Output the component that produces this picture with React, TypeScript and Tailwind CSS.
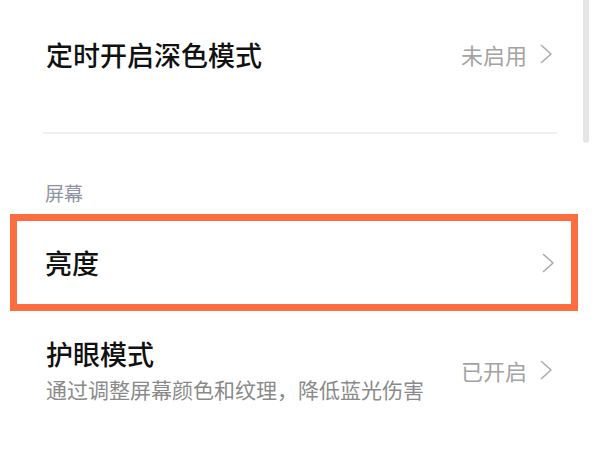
import React from 'react';

const cjk = { fontFamily: '"Noto Sans CJK SC", "Noto Sans", sans-serif' };

function Chevron() {
  return (
    <svg width="13" height="20" viewBox="0 0 13 20" fill="none" className="shrink-0">
      <polyline points="1.5,1.5 11,10 1.5,18.5" stroke="#ababab" strokeWidth="1.6" strokeLinecap="round" strokeLinejoin="round" />
    </svg>
  );
}

export default function App() {
  return (
    <div className="relative w-[600px] h-[450px] overflow-hidden bg-white" style={cjk}>
      {/* 滚动条 */}
      <div className="absolute right-[11px] top-0 w-[6px] h-[143px] rounded-b-full bg-[#e6e6e6]" />

      {/* 定时开启深色模式 */}
      <div className="flex items-center h-[108px] pl-[46px] pr-[47px]">
        <span className="flex-1 text-[27px] font-medium text-[#111] leading-none">定时开启深色模式</span>
        <span className="text-[22px] text-[#a3a3a3] leading-none mr-[13px]">未启用</span>
        <Chevron />
      </div>
      <div className="ml-[43px] mr-[43px] mt-[24px] h-[2px] bg-[#efefef]" />

      {/* 屏幕 */}
      <div className="pl-[45px] pt-[47px] pb-[9px] text-[19px] leading-[24px] text-[#8e93a3]">屏幕</div>

      {/* 亮度 */}
      <div className="ml-[10px] mr-[22px] h-[97px] border-[7px] border-[#fc6d40] flex items-center pl-[28px] pr-[16px]">
        <span className="flex-1 text-[27px] font-medium text-[#111] leading-none">亮度</span>
        <Chevron />
      </div>

      {/* 护眼模式 */}
      <div className="flex items-center pl-[46px] pr-[47px] pt-[29px]">
        <div className="flex-1 flex flex-col gap-[12px]">
          <span className="text-[27px] font-medium text-[#111] leading-none">护眼模式</span>
          <span className="text-[21px] text-[#8a8a8a] leading-none">通过调整屏幕颜色和纹理，降低蓝光伤害</span>
        </div>
        <span className="text-[22px] text-[#a3a3a3] leading-none mr-[13px]">已开启</span>
        <Chevron />
      </div>
    </div>
  );
}
